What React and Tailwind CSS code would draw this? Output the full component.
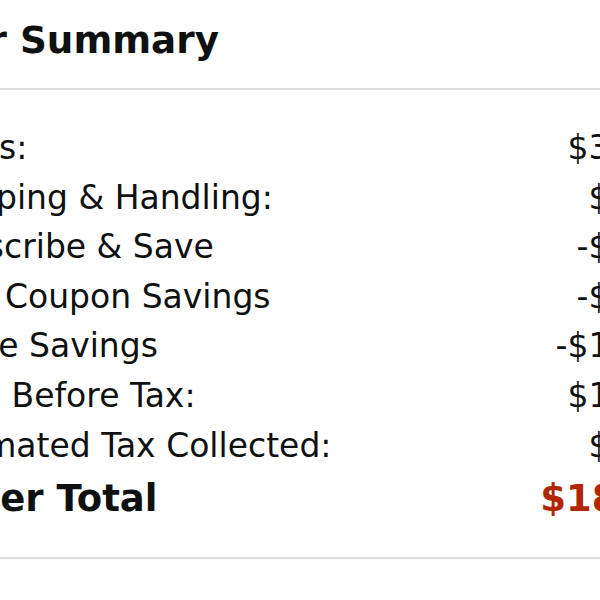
export default function App() {
  const rows = [
    ["Items:", "$34.97"],
    ["Shipping & Handling:", "$0.00"],
    ["Subscribe & Save", "-$1.75"],
    ["Your Coupon Savings", "-$3.00"],
    ["Prime Savings", "-$12.00"],
    ["Total Before Tax:", "$18.22"],
    ["Estimated Tax Collected:", "$0.53"],
  ];
  return (
    <div className="w-[600px] h-[600px] overflow-hidden bg-white text-[#0f1111]" style={{ fontFamily: '"DejaVu Sans", sans-serif' }}>
      <div className="ml-[-76px] w-[759px]">
        <h2 className="pt-[22px] ml-[-37.5px] text-[37.3px] leading-[37px] font-bold whitespace-nowrap">Order Summary</h2>
        <div className="mt-[29px] h-[2px] bg-[#dddddd]" />
        <div className="pt-[33px]">
          {rows.map(([l, v]) => (
            <div key={l} className="flex justify-between text-[33px] leading-[49.6px] whitespace-nowrap">
              <span>{l}</span>
              <span>{v}</span>
            </div>
          ))}
          <div className="mt-[3.5px] flex justify-between text-[37px] leading-[50px] font-bold whitespace-nowrap">
            <span>Order Total</span>
            <span className="text-[#b12704]">$18.75</span>
          </div>
        </div>
        <div className="mt-[33.3px] h-[2px] bg-[#dddddd]" />
      </div>
    </div>
  );
}
